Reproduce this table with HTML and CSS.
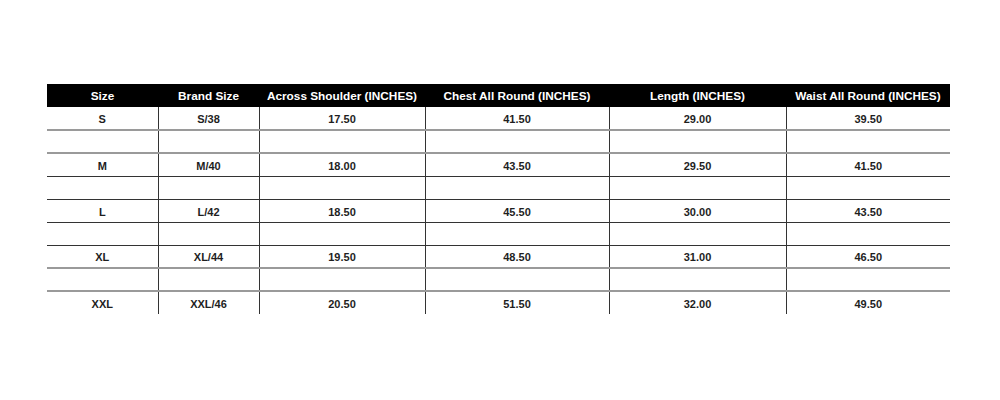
FILE: index.html
```html
<!DOCTYPE html>
<html>
<head>
<meta charset="utf-8">
<link rel="stylesheet" href="styles.css">
</head>
<body>
<table class="size-chart">
  <colgroup>
    <col class="c1"><col class="c2"><col class="c3"><col class="c4"><col class="c5"><col class="c6">
  </colgroup>
  <thead>
    <tr class="head">
      <th>Size</th><th>Brand Size</th><th>Across Shoulder (INCHES)</th><th>Chest All Round (INCHES)</th><th>Length (INCHES)</th><th>Waist All Round (INCHES)</th>
    </tr>
  </thead>
  <tbody>
    <tr class="row first"><td>S</td><td>S/38</td><td>17.50</td><td>41.50</td><td>29.00</td><td>39.50</td></tr>
    <tr class="row gap light"><td></td><td></td><td></td><td></td><td></td><td></td></tr>
    <tr class="row"><td>M</td><td>M/40</td><td>18.00</td><td>43.50</td><td>29.50</td><td>41.50</td></tr>
    <tr class="row gap"><td></td><td></td><td></td><td></td><td></td><td></td></tr>
    <tr class="row"><td>L</td><td>L/42</td><td>18.50</td><td>45.50</td><td>30.00</td><td>43.50</td></tr>
    <tr class="row gap"><td></td><td></td><td></td><td></td><td></td><td></td></tr>
    <tr class="row"><td>XL</td><td>XL/44</td><td>19.50</td><td>48.50</td><td>31.00</td><td>46.50</td></tr>
    <tr class="row gap light"><td></td><td></td><td></td><td></td><td></td><td></td></tr>
    <tr class="row"><td>XXL</td><td>XXL/46</td><td>20.50</td><td>51.50</td><td>32.00</td><td>49.50</td></tr>
  </tbody>
</table>
</body>
</html>
```
FILE: styles.css
```css
html, body {
  margin: 0;
  padding: 0;
  background: #ffffff;
}
body {
  padding-top: 84px;
  padding-left: 47px;
}
.size-chart {
  border-collapse: collapse;
  table-layout: fixed;
  width: 903px;
  font-family: "Liberation Sans", Arial, sans-serif;
  font-weight: bold;
}
.c1 { width: 111px; }
.c2 { width: 101px; }
.c3 { width: 166px; }
.c4 { width: 184px; }
.c5 { width: 177px; }
.c6 { width: 164px; }
.head th {
  background: #000000;
  color: #ffffff;
  height: 23px;
  box-sizing: border-box;
  padding: 1px 0 0 0;
  font-size: 11.8px;
  line-height: 14px;
  text-align: center;
  vertical-align: middle;
  white-space: nowrap;
}
.row td {
  height: 23px;
  box-sizing: border-box;
  padding: 3px 0 0 0;
  font-size: 11px;
  line-height: 13px;
  color: #1e1e1e;
  text-align: center;
  vertical-align: middle;
  border-left: 1px solid #333333;
  border-top: 1px solid #333333;
}
.row.first td {
  border-top: none;
}
.row td:first-child {
  border-left: none;
}
.row.light td {
  border-top: 2px solid #9a9a9a;
}
.row.light + .row td {
  border-top: 2px solid #9a9a9a;
}
.row.light td:first-child,
.row.light + .row td:first-child {
  border-left: none;
}
```
